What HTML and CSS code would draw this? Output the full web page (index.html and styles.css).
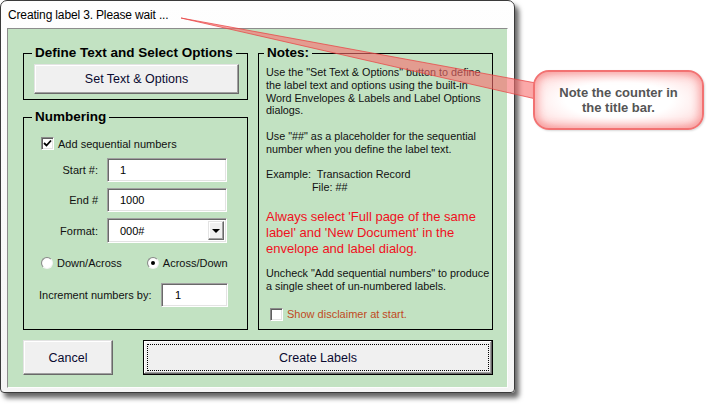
FILE: index.html
```html
<!DOCTYPE html>
<html lang="en">
<head>
  <meta charset="UTF-8">
  <title>Creating label 3. Please wait ...</title>
  <link rel="stylesheet" href="styles.css">
</head>
<body>
  <div class="stage">
    <div class="window">
      <div class="titlebar">Creating label 3. Please wait ...</div>
      <div class="client">
        <div class="groups">
          <div class="col-left">
            <fieldset class="group group-define">
              <legend>Define Text and Select Options</legend>
              <div class="btn btn-options">Set Text &amp; Options</div>
            </fieldset>

            <fieldset class="group group-numbering">
              <legend>Numbering</legend>
              <div class="check-row row-seq">
                <span class="checkbox checked">
                  <svg width="9" height="9" viewBox="0 0 9 9"><polyline points="1,4 3.5,6.5 8,1.5" fill="none" stroke="#000" stroke-width="1.8"/></svg>
                </span>
                Add sequential numbers
              </div>
              <div class="field-row row-start">
                <span class="field-label">Start #:</span>
                <span class="textbox">1</span>
              </div>
              <div class="field-row row-end">
                <span class="field-label">End #</span>
                <span class="textbox">1000</span>
              </div>
              <div class="field-row row-format">
                <span class="field-label">Format:</span>
                <span class="textbox combo">000#<span class="drop-btn"><span class="arrow"></span></span></span>
              </div>
              <div class="radio-row">
                <span class="radio-item"><span class="radio"></span>Down/Across</span>
                <span class="radio-item"><span class="radio selected"></span>Across/Down</span>
              </div>
              <div class="field-row row-inc">
                <span class="inc-label">Increment numbers by:</span>
                <span class="textbox small">1</span>
              </div>
            </fieldset>
          </div>

          <fieldset class="group group-notes">
            <legend>Notes:</legend>
            <p>Use the "Set Text &amp; Options" button to define the label text and options using the built-in Word Envelopes &amp; Labels and Label Options dialogs.</p>
            <p>Use "##" as a placeholder for the sequential number when you define the label text.</p>
            <p class="example">Example:&nbsp; Transaction Record<br><span class="indent">File: ##</span></p>
            <p class="warning">Always select 'Full page of the same label' and 'New Document' in the envelope and label dialog.</p>
            <p class="uncheck">Uncheck "Add sequential numbers" to produce a single sheet of un-numbered labels.</p>
            <div class="check-row disclaimer"><span class="checkbox"></span>Show disclaimer at start.</div>
          </fieldset>
        </div>

        <div class="actions">
          <div class="btn btn-cancel">Cancel</div>
          <div class="btn btn-default">Create Labels</div>
        </div>
      </div>
    </div>

    <!-- callout pointer -->
    <svg class="pointer" width="720" height="410" viewBox="0 0 720 410">
      <polygon points="181,18 536,83 536,99" fill="rgba(248,110,110,0.6)" stroke="rgba(232,70,70,0.75)" stroke-width="1"/>
    </svg>
    <div class="callout">Note the counter in<br>the title bar.</div>
  </div>
</body>
</html>
```

FILE: styles.css
```css
body {
  margin: 0;
  background: #fff;
  font-family: "Liberation Sans", Arial, sans-serif;
  font-size: 11px;
  color: #111;
}
.stage {
  position: relative;
  width: 720px;
  height: 410px;
}
.window {
  width: 515px;
  height: 393px;
  box-sizing: border-box;
  border: 1px solid #3a3a3a;
  border-radius: 7px 7px 4px 4px;
  background: linear-gradient(#fefefe, #f4f4f4);
  padding: 0 6px 4px;
  box-shadow: 4px 5px 5px rgba(0, 0, 0, 0.6);
  display: flex;
  flex-direction: column;
}
.titlebar {
  flex: none;
  height: 27px;
  box-sizing: border-box;
  padding: 7px 0 0 1px;
  font-size: 12px;
  line-height: 15px;
  letter-spacing: -0.15px;
  color: #000;
}
.client {
  flex: 1;
  min-height: 0;
  background: #c2e2c2;
  border: 1px solid;
  border-color: #8c8c8c #fdfdfd #fdfdfd #8c8c8c;
  padding: 16px 14px 12px 15px;
  display: flex;
  flex-direction: column;
}
.groups {
  display: grid;
  grid-template-columns: 225px 235px;
  column-gap: 10px;
}
.col-left {
  display: flex;
  flex-direction: column;
  gap: 9px;
}
.group {
  margin: 0;
  min-width: 0;
  border: 1px solid #000;
}
.group legend {
  font-size: 13.5px;
  font-weight: bold;
  line-height: 16px;
  padding: 0 3px;
  margin-left: -2px;
  color: #000;
}

/* buttons */
.btn {
  box-sizing: border-box;
  background: #f0f0f0;
  border: 1px solid;
  border-color: #e3e3e3 #696969 #696969 #e3e3e3;
  box-shadow: inset -1px -1px 0 #a0a0a0, inset 1px 1px 0 #fff;
  font-size: 12.5px;
  color: #0a0a30;
  display: flex;
  align-items: center;
  justify-content: center;
}
.group-define {
  padding: 3px 8px 5px 10px;
}
.btn-options {
  height: 30px;
  width: 205px;
}
.actions {
  display: flex;
  gap: 30px;
  margin-top: 10px;
}
.btn-cancel {
  width: 90px;
  height: 35px;
}
.btn-default {
  position: relative;
  width: 350px;
  height: 35px;
  border: 1px solid #000;
  box-shadow: inset -1px -1px 0 #696969, inset 1px 1px 0 #fff, inset -2px -2px 0 #a0a0a0;
}
.btn-default::after {
  content: "";
  position: absolute;
  inset: 3px;
  border: 1px dotted #000;
}

/* numbering group */
.group-numbering {
  padding: 12px 8px 22px 10px;
}
.check-row {
  display: flex;
  align-items: center;
  height: 13px;
}
.row-seq {
  margin-left: 7px;
}
.checkbox {
  box-sizing: border-box;
  width: 13px;
  height: 13px;
  background: #fff;
  border: 1px solid;
  border-color: #8a8a8a #fff #fff #8a8a8a;
  box-shadow: inset 1px 1px 0 #5f5f5f, inset -1px -1px 0 #e3e3e3;
  margin-right: 4px;
  display: flex;
  align-items: center;
  justify-content: center;
  flex: none;
}
.field-row {
  display: flex;
  align-items: center;
  gap: 9px;
}
.field-label {
  width: 64px;
  text-align: right;
}
.row-start {
  margin-top: 8px;
}
.row-end,
.row-format {
  margin-top: 6px;
}
.textbox {
  box-sizing: border-box;
  width: 120px;
  height: 24px;
  background: #fff;
  border: 1px solid;
  border-color: #a0a0a0 #fff #fff #a0a0a0;
  box-shadow: inset 1px 1px 0 #696969, inset -1px -1px 0 #e3e3e3;
  padding-left: 12px;
  display: flex;
  align-items: center;
  color: #000;
}
.combo {
  position: relative;
  height: 25px;
}
.drop-btn {
  position: absolute;
  right: 2px;
  top: 2px;
  bottom: 2px;
  width: 16px;
  box-sizing: border-box;
  background: #f0f0f0;
  border: 1px solid;
  border-color: #e3e3e3 #696969 #696969 #e3e3e3;
  box-shadow: inset -1px -1px 0 #a0a0a0, inset 1px 1px 0 #fff;
  display: flex;
  align-items: center;
  justify-content: center;
}
.arrow {
  width: 0;
  height: 0;
  border-left: 4px solid transparent;
  border-right: 4px solid transparent;
  border-top: 4px solid #000;
}
.radio-row {
  display: flex;
  margin-top: 13px;
  margin-left: 7px;
  height: 13px;
  align-items: center;
}
.radio-item {
  display: flex;
  align-items: center;
}
.radio-item + .radio-item {
  margin-left: 25px;
}
.radio {
  box-sizing: border-box;
  width: 12px;
  height: 12px;
  border-radius: 50%;
  border: 1px solid;
  border-color: #8a8a8a #f4f4f4 #f4f4f4 #8a8a8a;
  background: radial-gradient(circle at 60% 60%, #fff 55%, #e6e6e6);
  margin-right: 4px;
  display: flex;
  align-items: center;
  justify-content: center;
}
.radio.selected::after {
  content: "";
  width: 4px;
  height: 4px;
  border-radius: 50%;
  background: #000;
}
.row-inc {
  margin-top: 14px;
  margin-left: 5px;
}
.inc-label {
  width: 113px;
}
.textbox.small {
  width: 67px;
  padding-left: 13px;
}

/* notes group */
.group-notes {
  padding: 5px 0 0 7px;
  font-size: 10.8px;
  line-height: 12.8px;
}
.group-notes p {
  margin: 0 0 12.8px;
}
.indent {
  padding-left: 46px;
}
.group-notes .example {
  margin-bottom: 15px;
}
.group-notes .warning {
  font-size: 13px;
  line-height: 16px;
  color: #f0101e;
  margin-bottom: 10px;
}
.group-notes .uncheck {
  margin-bottom: 15px;
}
.disclaimer {
  margin-left: 4px;
  font-size: 11px;
  color: #c04a1e;
}

/* annotation */
.pointer {
  position: absolute;
  left: 0;
  top: 0;
  pointer-events: none;
}
.callout {
  position: absolute;
  left: 533px;
  top: 70px;
  width: 171px;
  height: 60px;
  box-sizing: border-box;
  border: 2px solid #f27272;
  border-radius: 16px;
  background: radial-gradient(ellipse at center, #fff 45%, #ffe4e4 80%, #fcc4c4);
  box-shadow: inset 0 0 8px 3px rgba(242, 110, 110, 0.55), 1px 1px 2px rgba(0, 0, 0, 0.15);
  font-size: 13px;
  font-weight: bold;
  line-height: 15px;
  color: #555;
  text-align: center;
  display: flex;
  align-items: center;
  justify-content: center;
}
```
